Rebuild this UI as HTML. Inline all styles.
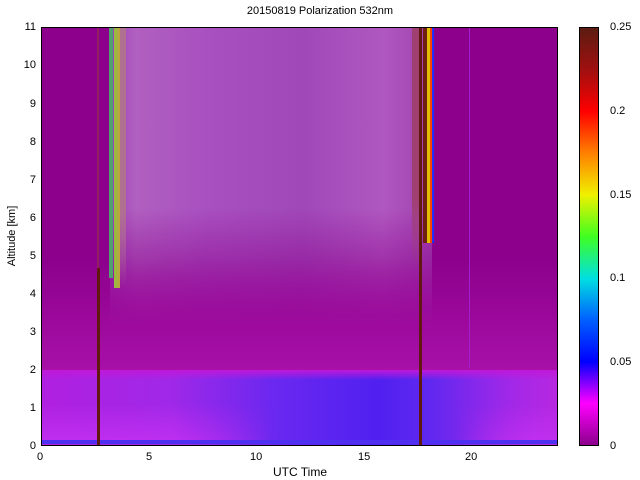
<!DOCTYPE html>
<html><head><style>
body{margin:0;width:640px;height:480px;background:#fff;position:relative;overflow:hidden;font-family:"Liberation Sans",sans-serif;font-size:11px;color:#000}
.a{position:absolute}
#plot{left:41px;top:27px;width:517px;height:419px;background:#8c008c;overflow:hidden;border:1px solid #000;box-sizing:border-box}
.yl{position:absolute;right:604px;width:30px;text-align:right}
</style></head><body>
<div class="a" style="left:0;top:5px;width:640px;text-align:center;font-size:11px">20150819 Polarization 532nm</div>
<div id="plot" class="a">
 <div class="a" style="left:68px;top:0;width:322px;height:300px;background:linear-gradient(90deg,#a040b8 0%,#b060c0 8%,#a850c0 30%,#a048b8 60%,#b058c0 85%,#a040b0 100%);-webkit-mask-image:linear-gradient(180deg,#000 60%,transparent 100%);mask-image:linear-gradient(180deg,#000 60%,transparent 100%)"></div>
 <div class="a" style="left:0;top:230px;width:517px;height:112px;background:linear-gradient(180deg,rgba(168,16,168,0),#a810a8)"></div>
 <div class="a" style="left:0;top:342px;width:517px;height:77px;background:linear-gradient(90deg,#b020e0 0%,#a028e8 25%,#6a28f0 45%,#5020f0 65%,#6028f0 75%,#a028e8 90%,#b828e0 100%)"></div>
 <div class="a" style="left:0;top:342px;width:517px;height:10px;background:linear-gradient(180deg,#c018d8,rgba(192,24,216,0))"></div>
 <div class="a" style="left:0;top:375px;width:517px;height:40px;background:linear-gradient(180deg,rgba(200,40,240,0),#c030f0);-webkit-mask-image:linear-gradient(90deg,#000 0%,#000 25%,transparent 45%,transparent 80%,#000 95%);mask-image:linear-gradient(90deg,#000 0%,#000 25%,transparent 45%,transparent 80%,#000 95%)"></div>
 <div class="a" style="left:0;top:412px;width:517px;height:4px;background:#5030f0"></div>
 <div class="a" style="left:67px;top:0;width:4px;height:250px;background:#50a070"></div>
 <div class="a" style="left:72px;top:0;width:6px;height:260px;background:linear-gradient(90deg,#90c040,#c0a040)"></div>
 <div class="a" style="left:78px;top:0;width:6px;height:260px;background:#b07090;-webkit-mask-image:linear-gradient(180deg,#000 70%,transparent);mask-image:linear-gradient(180deg,#000 70%,transparent)"></div>
 <div class="a" style="left:55px;top:240px;width:3px;height:179px;background:#601810"></div>
 <div class="a" style="left:55px;top:0;width:2px;height:240px;background:#902060"></div>
 <div class="a" style="left:377px;top:0;width:3px;height:419px;background:#601810"></div>
 <div class="a" style="left:370px;top:0;width:7px;height:240px;background:#a04070;-webkit-mask-image:linear-gradient(180deg,#000 70%,transparent);mask-image:linear-gradient(180deg,#000 70%,transparent)"></div>
 <div class="a" style="left:385px;top:0;width:3px;height:215px;background:#e0c000"></div>
 <div class="a" style="left:388px;top:0;width:2px;height:215px;background:#ff4000"></div>
 <div class="a" style="left:390px;top:0;width:2px;height:215px;background:#2030ff"></div>
 <div class="a" style="left:381px;top:0;width:4px;height:215px;background:#702010"></div>
 <div class="a" style="left:427px;top:0;width:1px;height:340px;background:#a020d0"></div>
</div>
<div class="yl" style="top:440px">0</div>
<div class="yl" style="top:402px">1</div>
<div class="yl" style="top:364px">2</div>
<div class="yl" style="top:326px">3</div>
<div class="yl" style="top:288px">4</div>
<div class="yl" style="top:250px">5</div>
<div class="yl" style="top:212px">6</div>
<div class="yl" style="top:174px">7</div>
<div class="yl" style="top:136px">8</div>
<div class="yl" style="top:98px">9</div>
<div class="yl" style="top:59px">10</div>
<div class="yl" style="top:21px">11</div>
<div class="a" style="left:37px;top:451px">0</div>
<div class="a" style="left:146px;top:451px">5</div>
<div class="a" style="left:250px;top:451px">10</div>
<div class="a" style="left:358px;top:451px">15</div>
<div class="a" style="left:465px;top:451px">20</div>
<div class="a" style="left:0;top:465px;width:600px;text-align:center;font-size:12px">UTC Time</div>
<div class="a" style="left:-28px;top:230px;width:80px;text-align:center;transform:rotate(-90deg);font-size:11px">Altitude [km]</div>
<div class="a" style="left:579px;top:27px;width:20px;height:419px;border:1px solid #000;box-sizing:border-box;background:linear-gradient(180deg,#5c1c10 0%,#a01010 10%,#ff0000 20%,#ff8000 30%,#f0f000 40%,#40ff20 50%,#00e0e0 60%,#0060ff 70%,#0000ff 80%,#ff00ff 90%,#8c008c 100%)"></div>
<div class="a" style="left:610px;top:21px">0.25</div>
<div class="a" style="left:610px;top:105px">0.2</div>
<div class="a" style="left:610px;top:189px">0.15</div>
<div class="a" style="left:610px;top:272px">0.1</div>
<div class="a" style="left:610px;top:356px">0.05</div>
<div class="a" style="left:610px;top:440px">0</div>
</body></html>
